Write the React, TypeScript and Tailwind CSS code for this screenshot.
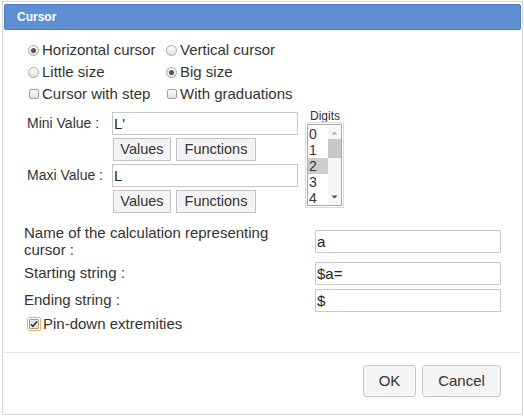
import React from 'react'

const font = "font-['Liberation_Sans',Arial,sans-serif]"

// radio button imitation
const Radio = ({ checked }: { checked?: boolean }) => (
  <span className="w-[11px] h-[11px] rounded-full border border-[#a8a8a8] bg-gradient-to-b from-[#fdfdfd] to-[#e4e4e4] flex items-center justify-center shrink-0">
    {checked && <span className="w-[5px] h-[5px] rounded-full bg-[#555]" />}
  </span>
)

const Check = () => (
  <span className="w-[10px] h-[10px] rounded-[2px] border border-[#a0a0a0] bg-gradient-to-b from-[#fafafa] to-[#e2e2e2] shrink-0" />
)

const Option = ({ kind, checked, label }: { kind: 'radio' | 'check'; checked?: boolean; label: string }) => (
  <div className="flex items-center gap-[3px] h-[22px]">
    <span className="w-[11px] flex justify-center">{kind === 'radio' ? <Radio checked={checked} /> : <Check />}</span>
    <span className="text-[15px] leading-[22px]">{label}</span>
  </div>
)

const Btn = ({ label, w }: { label: string; w: string }) => (
  <button className={`${w} h-[23px] border border-[#c4c4c4] bg-[#f4f4f4] text-[14.5px] leading-[21px] text-[#333] flex items-center justify-center`}>
    {label}
  </button>
)

const Field = ({ value, w }: { value: string; w: string }) => (
  <div className={`${w} h-[23px] border border-[#c8c8c8] bg-white text-[15px] leading-[21px] pl-[1px] text-[#222]`}>
    {value}
  </div>
)

export default function App() {
  const digits = ['0', '1', '2', '3', '4']
  return (
    <div className={`w-[524px] h-[417px] bg-white pl-[2px] pt-[1px] text-[#333] ${font}`}>
      <div className="w-[521px] h-[414px] border border-[#d8d8d8] p-px pt-[2px] flex flex-col">
        {/* title bar */}
        <div className="h-[26px] bg-[#5f8fd3] border border-[#4b7cc4] rounded-[2px] pl-[12px] flex items-center text-white text-[12px] font-bold">
          Cursor
        </div>

        {/* cursor options */}
        <div className="mt-[9px] pl-[24px] grid grid-cols-[138px_1fr]">
          <Option kind="radio" checked label="Horizontal cursor" />
          <Option kind="radio" label="Vertical cursor" />
          <Option kind="radio" label="Little size" />
          <Option kind="radio" checked label="Big size" />
          <Option kind="check" label="Cursor with step" />
          <Option kind="check" label="With graduations" />
        </div>

        {/* mini / maxi values + digits */}
        <div className="mt-[7px] pl-[23px] flex">
          <div className="flex flex-col gap-[3px]">
            <div className="flex items-center">
              <span className="w-[85px] text-[14px]">Mini Value :</span>
              <Field value="L'" w="w-[186px]" />
            </div>
            <div className="flex gap-[5px] pl-[86px]">
              <Btn label="Values" w="w-[58px]" />
              <Btn label="Functions" w="w-[80px]" />
            </div>
            <div className="flex items-center">
              <span className="w-[85px] text-[14px]">Maxi Value :</span>
              <Field value="L" w="w-[186px]" />
            </div>
            <div className="flex gap-[5px] pl-[86px]">
              <Btn label="Values" w="w-[58px]" />
              <Btn label="Functions" w="w-[80px]" />
            </div>
          </div>
          <div className="ml-[7px] -mt-[2px] flex flex-col">
            <span className="text-[12px] leading-[12px] pl-[5px]">Digits</span>
            <div className="w-[39px] h-[86px] border border-[#dcdcdc] p-px">
              <div className="h-full border border-[#aaa] flex">
                <div className="w-[21px] flex flex-col pt-[1px]">
                  {digits.map((d) => (
                    <span key={d} className={`h-[16px] text-[14px] leading-[16px] pl-[1px] ${d === '2' ? 'bg-[#cdcdcd]' : ''}`}>
                      {d}
                    </span>
                  ))}
                </div>
                <div className="w-[13px] flex flex-col items-center bg-[#f7f7f7]">
                  <svg width="13" height="12" viewBox="0 0 13 12" className="mt-[2px]">
                    <path d="M3.5 7.5 L6.5 4.5 L9.5 7.5 Z" fill="#b0b0b0" />
                  </svg>
                  <div className="w-[13px] h-[19px] bg-[#c8c8c8]" />
                  <div className="flex-1" />
                  <svg width="13" height="12" viewBox="0 0 13 12" className="mb-[2px]">
                    <path d="M3.5 4.5 L9.5 4.5 L6.5 7.5 Z" fill="#505050" />
                  </svg>
                </div>
              </div>
            </div>
          </div>
        </div>

        {/* calculation name / strings */}
        <div className="mt-[11px] pl-[20px] flex flex-col gap-[4px]">
          <div className="flex items-center">
            <span className="w-[291px] pr-[20px] text-[15px] leading-[17px]">Name of the calculation representing cursor :</span>
            <Field value="a" w="w-[186px]" />
          </div>
          <div className="flex items-center">
            <span className="w-[291px] text-[15px]">Starting string :</span>
            <Field value="$a=" w="w-[186px]" />
          </div>
          <div className="flex items-center">
            <span className="w-[291px] text-[15px]">Ending string :</span>
            <Field value="$" w="w-[186px]" />
          </div>
        </div>

        <div className="mt-[5px] pl-[23px] flex items-center gap-[2px] h-[14px]">
          <span className="w-[14px] h-[14px] border border-[#f0b45a] rounded-[2px] flex items-center justify-center">
            <span className="w-[10px] h-[10px] bg-[#e6e6e6] border border-[#9a9a9a] rounded-[1px] flex items-center justify-center">
              <svg width="8" height="8" viewBox="0 0 8 8">
                <path d="M1 4.2 L3 6.2 L7 1.5" stroke="#333" strokeWidth="1.6" fill="none" />
              </svg>
            </span>
          </span>
          <span className="text-[15px]">Pin-down extremities</span>
        </div>

        {/* footer */}
        <div className="mt-[21px] mr-[1px] border-t border-[#e5e5e5] pt-[12px] flex justify-end gap-[6px] pr-[19px]">
          <button className="w-[53px] h-[32px] border border-[#c8c8c8] rounded-[3px] bg-[#f5f5f5] text-[15px] text-[#333]">OK</button>
          <button className="w-[79px] h-[32px] border border-[#c8c8c8] rounded-[3px] bg-[#f5f5f5] text-[15px] text-[#333]">Cancel</button>
        </div>
      </div>
    </div>
  )
}
